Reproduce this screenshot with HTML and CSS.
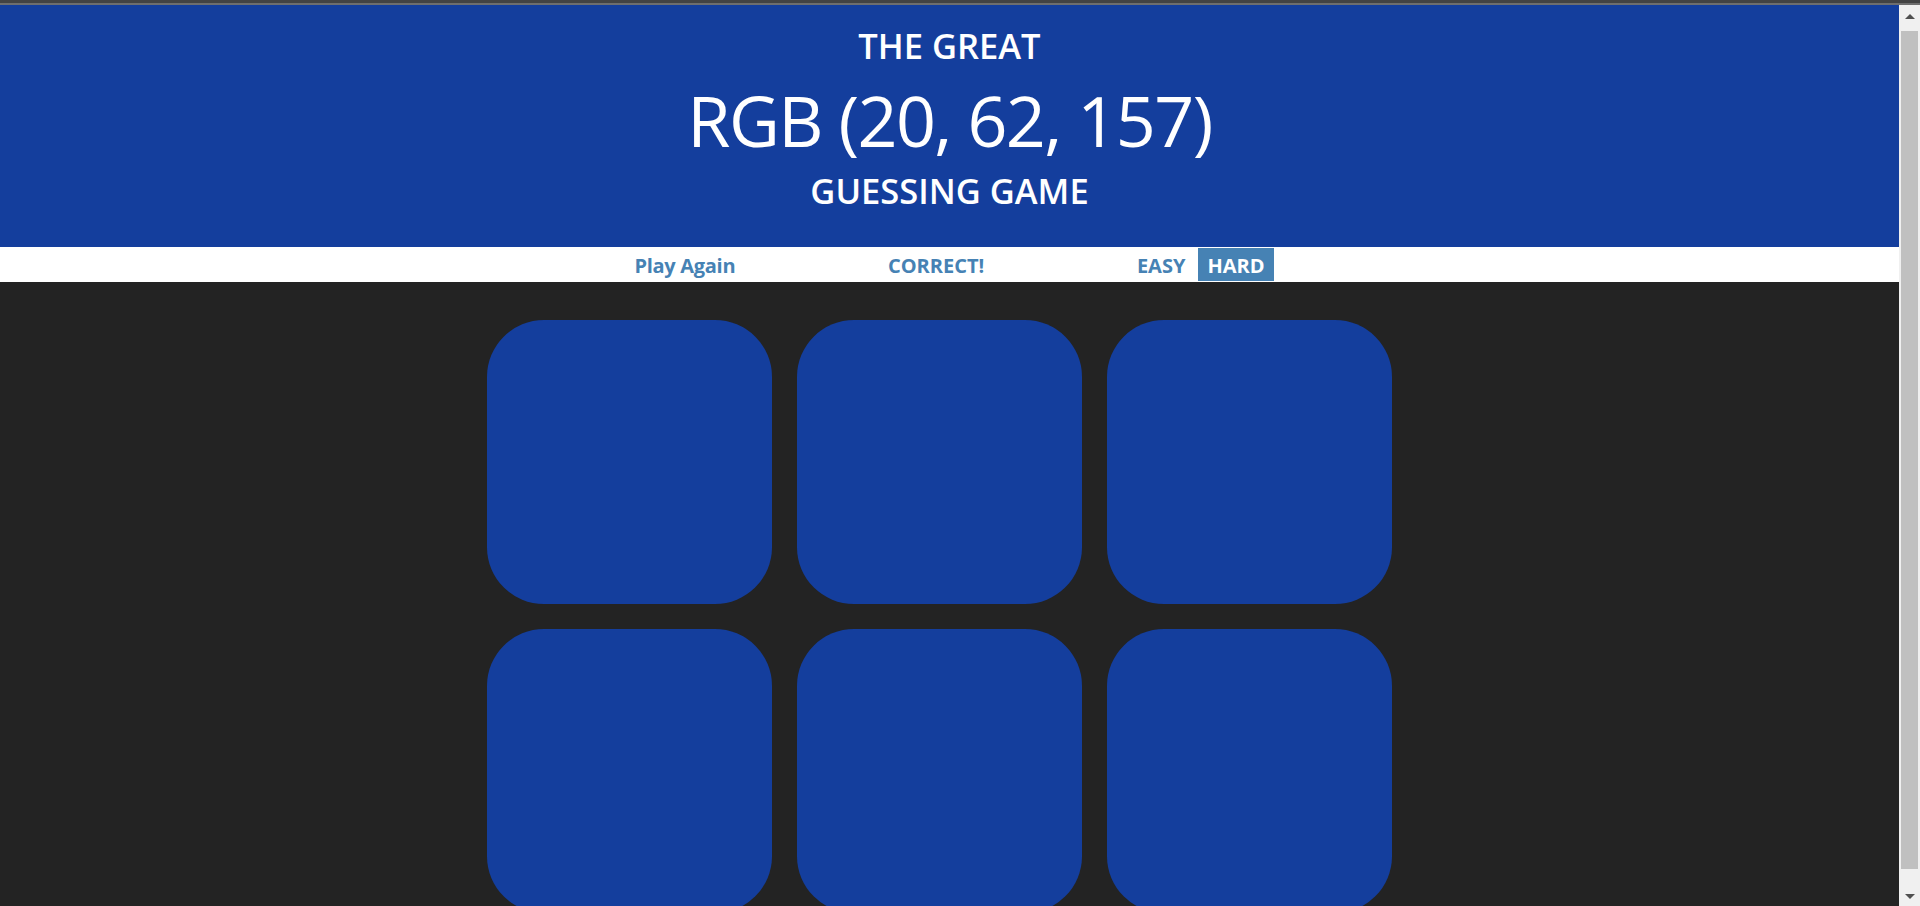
FILE: index.html
```html
<!DOCTYPE html>
<html lang="en">
<head>
<meta charset="utf-8">
<title>Colour Game</title>
<link rel="stylesheet" href="styles.css">
</head>
<body>
<div class="frame-top"></div>
<div class="window">
  <div class="page">
    <h1 class="title">
      <span class="title-line">The Great</span>
      <span class="title-color">RGB (20, 62, 157)</span>
      <span class="title-line title-last">Guessing Game</span>
    </h1>
    <div class="stripe">
      <div class="stripe-inner">
        <button class="btn btn-play">Play Again</button>
        <span class="message">CORRECT!</span>
        <div class="modes">
          <button class="btn mode">EASY</button>
          <button class="btn mode selected">HARD</button>
        </div>
      </div>
    </div>
    <div class="board">
      <div class="grid">
        <div class="square"></div>
        <div class="square"></div>
        <div class="square"></div>
        <div class="square"></div>
        <div class="square"></div>
        <div class="square"></div>
      </div>
    </div>
  </div>
  <div class="scrollbar">
    <div class="sb-up">
      <svg width="10" height="5" viewBox="0 0 10 5"><polygon points="0,5 10,5 5,0" fill="#505050"/></svg>
    </div>
    <div class="sb-thumb"></div>
    <div class="sb-down">
      <svg width="10" height="5" viewBox="0 0 10 5"><polygon points="0,0 10,0 5,5" fill="#505050"/></svg>
    </div>
  </div>
</div>
</body>
</html>
```

FILE: styles.css
```css
html, body {
  margin: 0;
  padding: 0;
  height: 100%;
  overflow: hidden;
}
body {
  background: #232323;
  font-family: "Open Sans", "Noto Sans", sans-serif;
  display: flex;
  flex-direction: column;
}
.frame-top {
  height: 3px;
  background: #434343;
  border-bottom: 2px solid #6e6e6e;
  flex: none;
}
.window {
  flex: 1;
  display: flex;
  min-height: 0;
}
.page {
  flex: 1;
  min-width: 0;
  overflow: hidden;
}
.title {
  margin: 0;
  background: #143e9d;
  color: #ffffff;
  text-align: center;
  text-transform: uppercase;
  padding: 21px 0 40px;
  display: flex;
  flex-direction: column;
  font-weight: 600;
}
.title-line {
  font-size: 34.5px;
  line-height: 40px;
}
.title-last {
  line-height: 33px;
}
.title-color {
  font-size: 70px;
  line-height: 108px;
  font-weight: 400;
  letter-spacing: -1.6px;
}
.stripe {
  background: #ffffff;
  height: 35px;
  box-sizing: border-box;
  padding: 1px 0;
}
.stripe-inner {
  width: 648px;
  margin: 0 auto;
  height: 33px;
  display: flex;
  justify-content: space-between;
  align-items: center;
}
.btn {
  border: none;
  background: none;
  font-family: inherit;
  font-weight: 700;
  font-size: 20px;
  color: #4682b4;
  height: 33px;
  line-height: 35px;
  padding: 0 9px;
  margin: 0;
}
.btn-play {
  letter-spacing: -0.3px;
}
.message {
  font-weight: 700;
  font-size: 20px;
  color: #4682b4;
  line-height: 35px;
  height: 33px;
}
.modes {
  display: flex;
  gap: 4px;
}
.selected {
  background: #4682b4;
  color: #ffffff;
}
.board {
  width: 950px;
  margin: 0 auto;
}
.grid {
  display: grid;
  grid-template-columns: repeat(3, 285px);
  grid-auto-rows: 284px;
  gap: 25px;
  padding: 38px 0 0 12.5px;
}
.square {
  background: #143e9d;
  border-radius: 20%;
}
.scrollbar {
  width: 21px;
  flex: none;
  background: #f0f0f0;
  display: flex;
  flex-direction: column;
}
.sb-up {
  height: 26px;
  display: flex;
  justify-content: center;
  align-items: flex-start;
}
.sb-up svg {
  margin-top: 9px;
}
.sb-thumb {
  height: 838px;
  margin: 0 2px;
  background: #c0c0c0;
}
.sb-down {
  flex: 1;
  display: flex;
  justify-content: center;
  align-items: flex-start;
}
.sb-down svg {
  margin-top: 25px;
}
```
